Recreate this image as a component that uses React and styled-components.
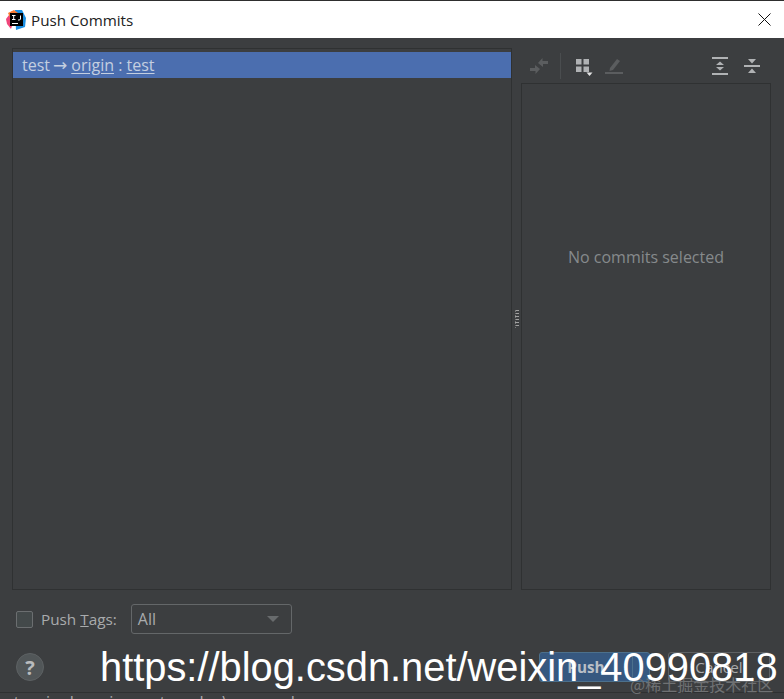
import React from "react";
import styled, { createGlobalStyle } from "styled-components";

const Global = createGlobalStyle`
  html, body { margin: 0; padding: 0; background: #3c3e40; }
  body { font-family: "Open Sans", "Noto Sans", sans-serif; }
`;

const Page = styled.div`
  position: relative;
  width: 784px;
  height: 699px;
  overflow: hidden;
  display: flex;
  flex-direction: column;
  background: #3c3e40;
`;
const TitleBar = styled.div`
  height: 37px;
  flex: none;
  border-top: 1px solid #2e2e2e;
  background: #fff;
  display: flex;
  align-items: center;
  padding: 0 13px 0 6px;
  gap: 5px;
`;
const Title = styled.div`
  flex: 1;
  font-size: 15.2px;
  color: #222;
`;
const Body = styled.div`
  height: 542px;
  flex: none;
  margin-top: 10px;
  padding: 0 13px 0 12px;
  display: flex;
`;
const LeftPanel = styled.div`
  width: 498px;
  border: 1px solid #2f3132;
  padding-top: 3px;
`;
const SelectedRow = styled.div`
  height: 26px;
  background: #4b6eaf;
  display: flex;
  align-items: center;
  padding-left: 9px;
  font-size: 16px;
  color: #c4cfe0;
  white-space: pre;
`;
const Arrow = styled.span`
  margin: 0 4px 0 3px;
  font-family: "DejaVu Sans", sans-serif;
  font-size: 17px;
`;
const Ref = styled.span`
  text-decoration: underline;
  text-underline-offset: 2px;
`;
const Splitter = styled.div`
  width: 9px;
  flex: none;
  display: flex;
  align-items: center;
  justify-content: center;
`;
const Grip = styled.div`
  width: 3px;
  height: 18px;
  margin-left: 1px;
  background: repeating-linear-gradient(#a0a0a0 0 1px, #3c3e40 1px 3px);
  border-left: 1px dotted #777;
`;
const RightColumn = styled.div`
  flex: 1;
  display: flex;
  flex-direction: column;
`;
const Toolbar = styled.div`
  height: 35px;
  flex: none;
  display: flex;
  align-items: center;
  padding-left: 8px;
  padding-right: 9px;
`;
const ToolIcon = styled.svg`
  width: 20px;
  height: 20px;
  flex: none;
  margin-right: ${(p) => p.$gap || 0}px;
`;
const ToolSep = styled.div`
  width: 1px;
  height: 26px;
  background: #4a4d4f;
  margin: 0 13px 0 11px;
`;
const Spacer = styled.div`
  flex: 1;
`;
const DetailPanel = styled.div`
  flex: 1;
  border: 1px solid #2f3132;
  display: flex;
  justify-content: center;
  padding-top: 162px;
  font-size: 16px;
  color: #868a8c;
`;
const OptionsRow = styled.div`
  height: 30px;
  flex: none;
  margin-top: 14px;
  padding-left: 16px;
  display: flex;
  align-items: center;
`;
const Checkbox = styled.div`
  width: 15px;
  height: 15px;
  border: 1px solid #6b6e70;
  border-radius: 2px;
  background: #43494a;
`;
const Label = styled.label`
  margin-left: 8px;
  margin-right: 14px;
  font-size: 15.3px;
  color: #a9abad;
`;
const Mnemonic = styled.span`
  text-decoration: underline;
`;
const Select = styled.div`
  width: 161px;
  height: 30px;
  box-sizing: border-box;
  border: 1px solid #646769;
  border-radius: 3px;
  display: flex;
  align-items: center;
  justify-content: space-between;
  padding: 0 12px 0 6px;
  font-size: 16px;
  color: #a9abad;
`;
const Caret = styled.div`
  width: 0;
  height: 0;
  border-left: 6px solid transparent;
  border-right: 6px solid transparent;
  border-top: 6px solid #686b6d;
`;
const ButtonRow = styled.div`
  height: 30px;
  flex: none;
  margin-top: 18px;
  padding: 0 14px 0 16px;
  display: flex;
  align-items: center;
`;
const Help = styled.div`
  width: 28px;
  height: 28px;
  border-radius: 50%;
  background: #515658;
  border: 1px solid #5d6163;
  box-sizing: border-box;
  color: #b9bbbd;
  font-size: 20px;
  font-weight: 700;
  display: flex;
  align-items: center;
  justify-content: center;
`;
const PushButton = styled.div`
  width: 111px;
  height: 30px;
  box-sizing: border-box;
  border-radius: 3px;
  background: #365880;
  border: 1px solid #4c708c;
  display: flex;
  align-items: center;
  font-size: 15.3px;
  font-weight: 700;
  color: #b9bfc6;
`;
const PushLabel = styled.div`
  width: 92px;
  height: 100%;
  display: flex;
  align-items: center;
  justify-content: center;
  border-right: 1px solid #4c708c;
`;
const CancelButton = styled.div`
  width: 102px;
  height: 30px;
  box-sizing: border-box;
  border-radius: 3px;
  border: 1px solid #5e6163;
  margin-left: 18px;
  display: flex;
  align-items: center;
  justify-content: center;
  font-size: 15.3px;
  color: #a9abad;
`;
const BehindStrip = styled.div`
  position: absolute;
  left: 0;
  right: 0;
  top: 692px;
  height: 7px;
  background: #3c3e40;
  border-top: 1px solid #2f3132;
  overflow: hidden;
  font-size: 16.2px;
  line-height: 19px;
  color: #a9abad;
  white-space: nowrap;
  text-indent: -3px;
`;
const Watermark = styled.div`
  position: absolute;
  left: 100px;
  top: 642px;
  font-family: "Liberation Sans", Arial, sans-serif;
  font-size: 39.85px;
  line-height: 50px;
  color: #fff;
  white-space: nowrap;
`;
const Stamp = styled.div`
  position: absolute;
  left: 630px;
  top: 674px;
  font-family: "Noto Sans CJK SC", sans-serif;
  font-size: 16px;
  line-height: 20px;
  color: #6f7173;
  white-space: nowrap;
`;

const AppIcon = () => (
  <svg width="20" height="20" viewBox="0 0 20 20">
    <path d="M0 9 L6 1 L10 4 L5 19 L1 14Z" fill="#f0457a" />
    <path d="M9 0 H16 L20 8 L19 17 L10 20Z" fill="#1b8fe3" />
    <path d="M2 3 L8 0 L12 3 L5 10Z" fill="#f97a32" />
    <rect x="4" y="3" width="13" height="13" fill="#000" />
    <rect x="6" y="13" width="6" height="1" fill="#fff" />
    <path d="M6 5.5 h3.5 M7.7 5.5 v4 M6 9.5 h3.5 M14.5 5.5 v3.5 q0 1 -1.5 1 h-1" stroke="#fff" strokeWidth="1" fill="none" />
  </svg>
);

const CloseIcon = () => (
  <svg width="13" height="13" viewBox="0 0 13 13" fill="none" stroke="#111" strokeWidth="1">
    <path d="M0.5 0.5 L12.5 12.5 M12.5 0.5 L0.5 12.5" />
  </svg>
);

export default function App() {
  return (
    <Page>
      <Global />
      <TitleBar>
        <AppIcon />
        <Title>Push Commits</Title>
        <CloseIcon />
      </TitleBar>
      <Body>
        <LeftPanel>
          <SelectedRow>
            test<Arrow>→</Arrow><Ref>origin</Ref> : <Ref>test</Ref>
          </SelectedRow>
        </LeftPanel>
        <Splitter>
          <Grip />
        </Splitter>
        <RightColumn>
          <Toolbar>
            <ToolIcon viewBox="0 0 20 20" fill="#5b5d5f">
              <path d="M19 5 H13.5 V2 L9 7 L14 11 V8 H19Z" />
              <path d="M1 15 H6.5 V18 L11 13 L6 9 V12 H1Z" />
            </ToolIcon>
            <ToolSep />
            <ToolIcon viewBox="0 0 20 20" fill="#b0b2b4" $gap={10}>
              <rect x="2" y="3" width="5.5" height="5.5" />
              <rect x="9.5" y="3" width="5.5" height="5.5" />
              <rect x="2" y="10.5" width="5.5" height="5.5" />
              <rect x="9.5" y="10.5" width="5.5" height="5.5" />
              <path d="M12.5 16.5 H18.5 L15.5 20Z" fill="#e4e4e4" />
            </ToolIcon>
            <ToolIcon viewBox="0 0 20 20" fill="#5b5d5f">
              <path d="M6 12 L13 3 L16 5 L9 14 L5.5 15Z" />
              <rect x="1" y="16" width="18" height="2" />
            </ToolIcon>
            <Spacer />
            <ToolIcon viewBox="0 0 20 20" fill="#b0b2b4" $gap={12}>
              <rect x="2" y="1" width="16" height="2" />
              <rect x="2" y="17" width="16" height="2" />
              <path d="M10 5.5 L14 9 H6Z M10 14.5 L14 11 H6Z" />
            </ToolIcon>
            <ToolIcon viewBox="0 0 20 20" fill="#b0b2b4">
              <rect x="2" y="9" width="16" height="2" />
              <path d="M10 7.5 L14 3 H6Z M10 12.5 L14 17 H6Z" />
            </ToolIcon>
          </Toolbar>
          <DetailPanel>No commits selected</DetailPanel>
        </RightColumn>
      </Body>
      <OptionsRow>
        <Checkbox />
        <Label>
          Push <Mnemonic>T</Mnemonic>ags:
        </Label>
        <Select>
          All
          <Caret />
        </Select>
      </OptionsRow>
      <ButtonRow>
        <Help>?</Help>
        <Spacer />
        <PushButton>
          <PushLabel>Push</PushLabel>
        </PushButton>
        <CancelButton>Cancel</CancelButton>
      </ButtonRow>
      <BehindStrip>ectronic shopping system dao\pom.xml</BehindStrip>
      <Stamp>@稀土掘金技术社区</Stamp>
      <Watermark>https://blog.csdn.net/weixin_40990818</Watermark>
    </Page>
  );
}
